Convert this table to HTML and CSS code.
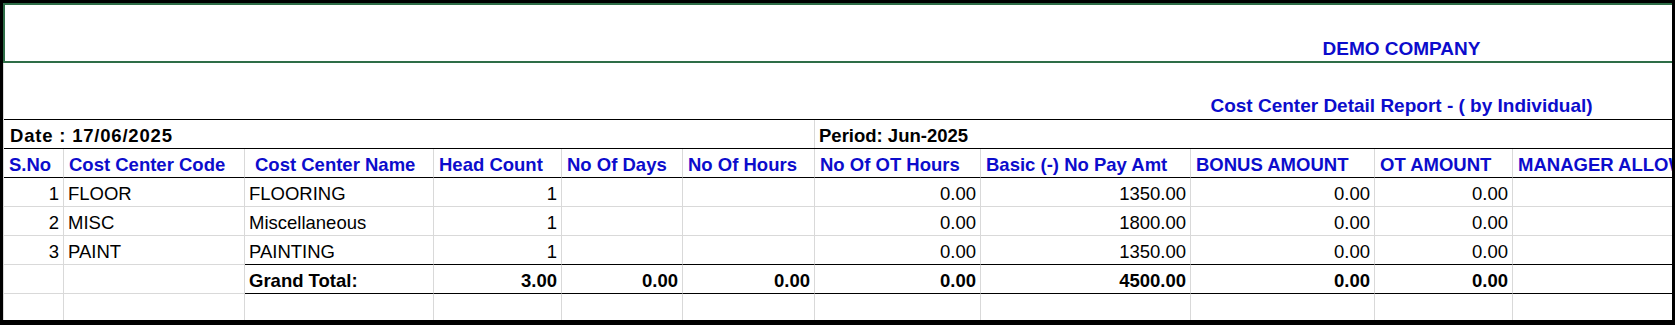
FILE: index.html
```html
<!DOCTYPE html>
<html>
<head>
<meta charset="utf-8">
<title>Cost Center Detail Report</title>
<link rel="stylesheet" href="styles.css">
</head>
<body>
<div class="sheet">
  <div class="banner"><div class="title-slot">DEMO COMPANY</div></div>
  <div class="lower">
    <div class="subtitle"><div class="title-slot sub">Cost Center Detail Report - ( by Individual)</div></div>
    <div class="info-row">
      <div class="info date">Date : 17/06/2025</div>
      <div class="info period">Period: Jun-2025</div>
    </div>
    <div class="grid">
      <div class="c h">S.No</div>
      <div class="c h">Cost Center Code</div>
      <div class="c h ind">Cost Center Name</div>
      <div class="c h">Head Count</div>
      <div class="c h">No Of Days</div>
      <div class="c h">No Of Hours</div>
      <div class="c h">No Of OT Hours</div>
      <div class="c h">Basic (-) No Pay Amt</div>
      <div class="c h">BONUS AMOUNT</div>
      <div class="c h">OT AMOUNT</div>
      <div class="c h last">MANAGER ALLOWANCE</div>

      <div class="c r">1</div>
      <div class="c">FLOOR</div>
      <div class="c">FLOORING</div>
      <div class="c r">1</div>
      <div class="c"></div>
      <div class="c"></div>
      <div class="c r">0.00</div>
      <div class="c r">1350.00</div>
      <div class="c r">0.00</div>
      <div class="c r">0.00</div>
      <div class="c last"></div>

      <div class="c r">2</div>
      <div class="c">MISC</div>
      <div class="c">Miscellaneous</div>
      <div class="c r">1</div>
      <div class="c"></div>
      <div class="c"></div>
      <div class="c r">0.00</div>
      <div class="c r">1800.00</div>
      <div class="c r">0.00</div>
      <div class="c r">0.00</div>
      <div class="c last"></div>

      <div class="c r">3</div>
      <div class="c">PAINT</div>
      <div class="c k">PAINTING</div>
      <div class="c r k">1</div>
      <div class="c k"></div>
      <div class="c k"></div>
      <div class="c r k">0.00</div>
      <div class="c r k">1350.00</div>
      <div class="c r k">0.00</div>
      <div class="c r k">0.00</div>
      <div class="c k last"></div>

      <div class="c"></div>
      <div class="c"></div>
      <div class="c b k">Grand Total:</div>
      <div class="c r b k">3.00</div>
      <div class="c r b k">0.00</div>
      <div class="c r b k">0.00</div>
      <div class="c r b k">0.00</div>
      <div class="c r b k">4500.00</div>
      <div class="c r b k">0.00</div>
      <div class="c r b k">0.00</div>
      <div class="c k last"></div>

      <div class="c"></div>
      <div class="c"></div>
      <div class="c"></div>
      <div class="c"></div>
      <div class="c"></div>
      <div class="c"></div>
      <div class="c"></div>
      <div class="c"></div>
      <div class="c"></div>
      <div class="c"></div>
      <div class="c last"></div>
    </div>
  </div>
</div>
</body>
</html>
```
FILE: styles.css
```css
html, body {
  margin: 0;
  padding: 0;
}
body {
  width: 1675px;
  height: 325px;
  overflow: hidden;
  background: #000;
  font-family: "Liberation Sans", Arial, sans-serif;
  color: #000;
}
.sheet {
  margin: 3px 3px 0 3px;
  height: 317px;
  background: #fff;
  overflow: hidden;
}
.banner {
  height: 60px;
  box-sizing: border-box;
  border: 2px solid #2e6d47;
  border-right: none;
  display: flex;
  align-items: flex-end;
  padding-left: 1126px;
}
.title-slot {
  flex: 1;
  text-align: center;
  font-size: 19px;
  font-weight: bold;
  color: #0c0ccc;
  line-height: 24px;
  white-space: nowrap;
}
.title-slot.sub {
  line-height: 26px;
}
.lower {
  border-left: 1px solid #d9d9d9;
}
.subtitle {
  height: 57px;
  box-sizing: border-box;
  border-bottom: 1px solid #000;
  display: flex;
  align-items: flex-end;
  padding-left: 1127px;
}
.info-row {
  display: flex;
  height: 29px;
  box-sizing: border-box;
  border-bottom: 1px solid #000;
  font-size: 18.5px;
  font-weight: bold;
  line-height: 31px;
}
.info {
  box-sizing: border-box;
  white-space: nowrap;
  overflow: hidden;
}
.date {
  width: 811px;
  border-right: 1px solid #d9d9d9;
  padding-left: 6px;
  letter-spacing: 0.8px;
}
.period {
  flex: 1;
  padding-left: 4px;
}
.grid {
  display: grid;
  grid-template-columns: 60px 181px 189px 128px 121px 132px 166px 210px 184px 138px 1fr;
  grid-auto-rows: 29px;
  font-size: 18.5px;
}
.c {
  box-sizing: border-box;
  border-right: 1px solid #d9d9d9;
  border-bottom: 1px solid #d9d9d9;
  padding: 0 4px 0 4px;
  line-height: 31px;
  white-space: nowrap;
  overflow: hidden;
}
.c.last {
  border-right: none;
}
.h {
  font-weight: bold;
  color: #0c0ccc;
  border-bottom-color: #000;
  padding-left: 5px;
}
.h.ind {
  padding-left: 10px;
}
.r {
  text-align: right;
}
.b {
  font-weight: bold;
}
.k {
  border-bottom-color: #000;
}
```
